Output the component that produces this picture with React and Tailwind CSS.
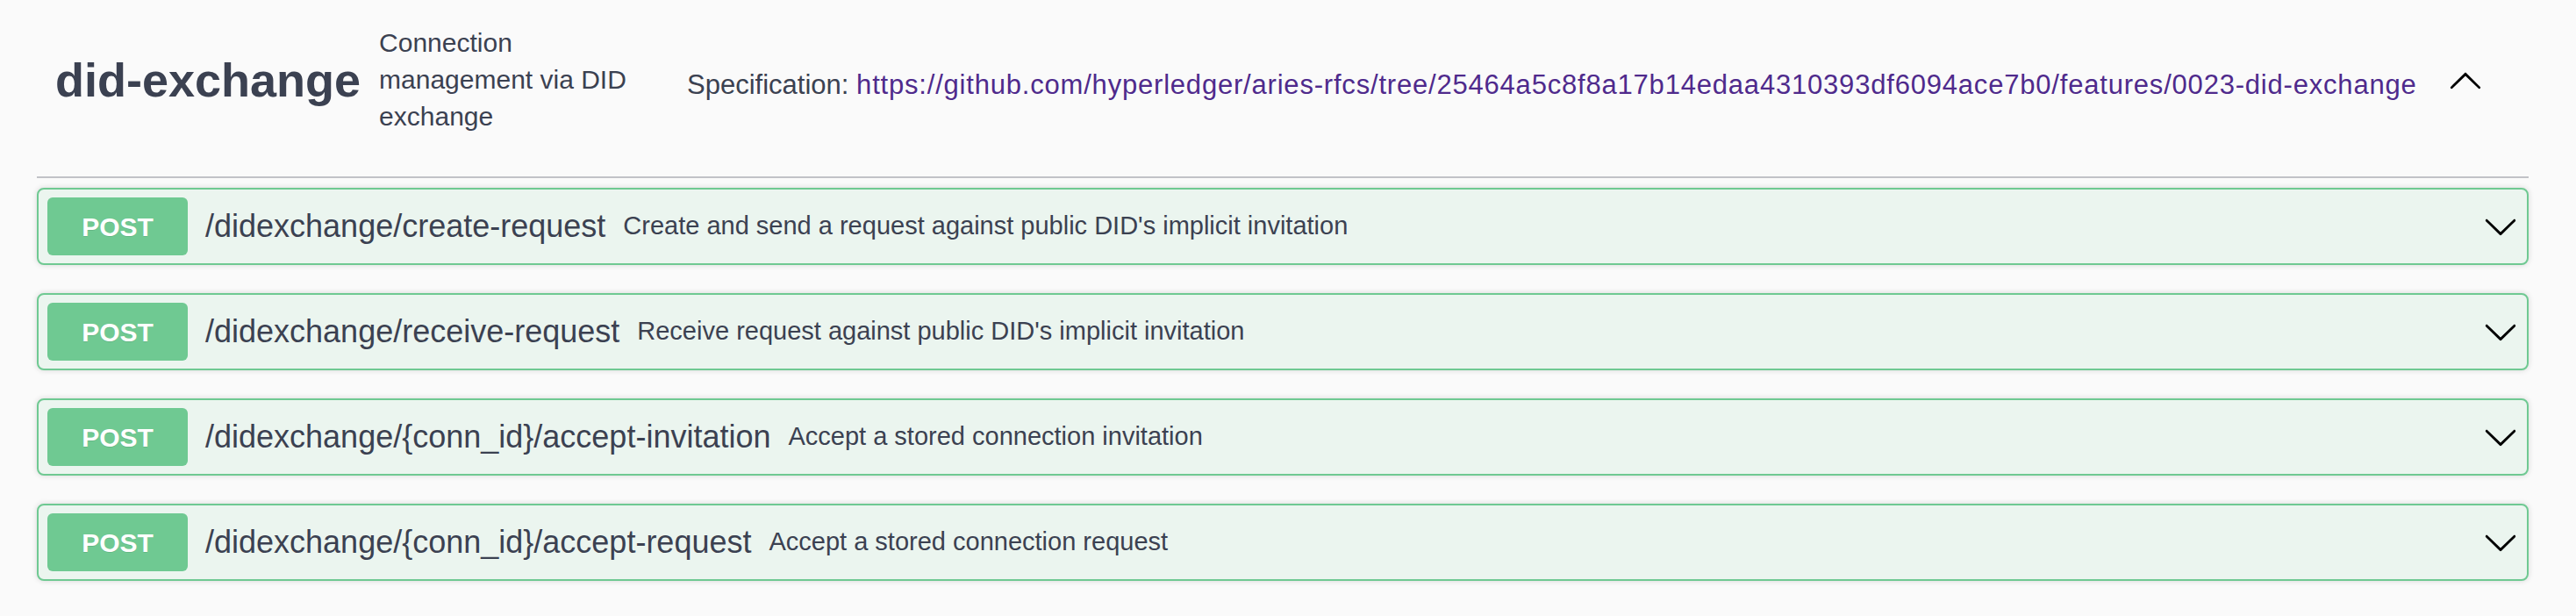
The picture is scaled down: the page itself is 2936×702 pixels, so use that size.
import React from "react"

const operations = [
  {
    path: "/didexchange/create-request",
    summary: "Create and send a request against public DID's implicit invitation",
  },
  {
    path: "/didexchange/receive-request",
    summary: "Receive request against public DID's implicit invitation",
  },
  {
    path: "/didexchange/{conn_id}/accept-invitation",
    summary: "Accept a stored connection invitation",
  },
  {
    path: "/didexchange/{conn_id}/accept-request",
    summary: "Accept a stored connection request",
  },
]

const SPEC_URL =
  "https://github.com/hyperledger/aries-rfcs/tree/25464a5c8f8a17b14edaa4310393df6094ace7b0/features/0023-did-exchange"

function ArrowUp() {
  return (
    <svg className="h-[40px] w-[40px]" viewBox="0 0 20 20" fill="#000">
      <path d="M17.418 14.908c.272.268.709.268.979 0s.271-.701 0-.969l-7.908-7.83c-.27-.268-.707-.268-.979 0l-7.908 7.83c-.27.268-.27.701 0 .969.271.268.709.268.979 0L10 7.767l7.418 7.141z" />
    </svg>
  )
}

function ArrowDown() {
  return (
    <svg className="h-[40px] w-[40px]" viewBox="0 0 20 20" fill="#000">
      <path d="M17.418 6.109c.272-.268.709-.268.979 0s.271.701 0 .969l-7.908 7.83c-.27.268-.707.268-.979 0l-7.908-7.83c-.27-.268-.27-.701 0-.969.271-.268.709-.268.979 0L10 13.25l7.418-7.141z" />
    </svg>
  )
}

export default function App() {
  return (
    <div className="min-h-screen bg-[#fafafa] pl-[42px] pr-[54px] font-['Liberation_Sans',Arial,sans-serif] text-[#3b4151]">
      {/* Tag header */}
      <div className="flex items-center border-b-2 border-[#c1c2c7] pt-[28px] pb-[47px]">
        <h3 className="pl-[21px] text-[54px] font-bold leading-none">did-exchange</h3>
        <p className="ml-[21px] w-[300px] text-[30px] leading-[42px]">Connection management via DID exchange</p>
        <div className="ml-[51px] pt-[12px] text-[31px] leading-[42px]">
          Specification:{" "}
          <a href="#" className="tracking-[0.8px] text-[#4f2a8c]">
            {SPEC_URL}
          </a>
        </div>
        <button className="ml-auto mr-[52px] flex items-center">
          <ArrowUp />
        </button>
      </div>

      {/* Operations */}
      <div className="mt-[11px] flex flex-col gap-[32px]">
        {operations.map((op) => (
          <div
            key={op.path}
            className="flex items-center rounded-[8px] border-2 border-[#6fc992] bg-[#ebf5ef] py-[9px] pl-[10px] pr-[10px] shadow-[0_0_6px_rgba(0,0,0,0.15)]"
          >
            <span className="flex h-[66px] w-[160px] items-center justify-center rounded-[6px] bg-[#6fc992] text-[30px] font-bold text-white text-shadow-[0_1px_0_rgba(0,0,0,0.1)]">
              POST
            </span>
            <span className="ml-[20px] text-[36px]">{op.path}</span>
            <span className="ml-[20px] text-[29px]">{op.summary}</span>
            <button className="ml-auto flex items-center">
              <ArrowDown />
            </button>
          </div>
        ))}
      </div>
    </div>
  )
}
